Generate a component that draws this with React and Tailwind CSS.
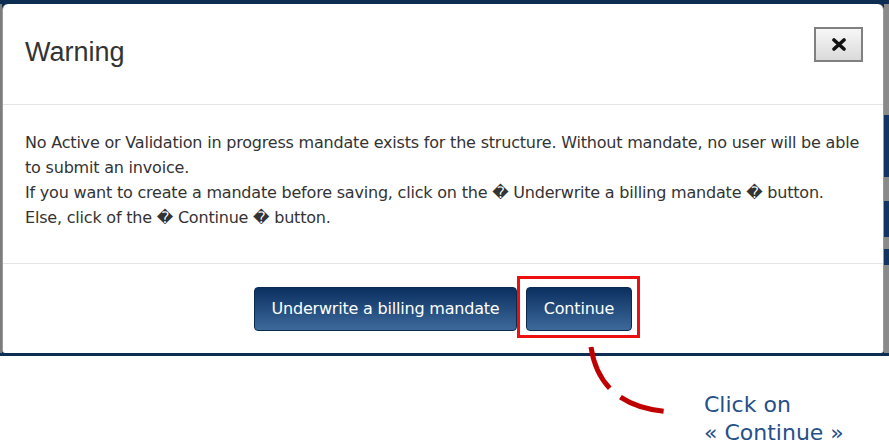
import React from "react";

const bodyFont = {fontFamily: '"DejaVu Sans", Verdana, sans-serif'};

const RightStrip = () => (
	<div className="flex flex-col w-[5px]">
		<div className="h-[111px] bg-[#8a8a8a]" />
		<div className="h-[62px] bg-[#123661]" />
		<div className="h-[24px] bg-[#8a8a8a]" />
		<div className="h-[36px] bg-[#123661]" />
		<div className="h-[12px] bg-[#8a8a8a]" />
		<div className="h-[16px] bg-[#123661]" />
		<div className="flex-1 bg-[#8a8a8a]" />
	</div>
);

const BlueButton = ({children, className = ""}) => (
	<button
		className={
			"h-[44px] rounded-[4px] border border-[#0a2a50] bg-gradient-to-b from-[#0a3060] to-[#3d6a9b] text-white text-[16px] tracking-[-0.2px] " +
			className
		}
		style={bodyFont}
	>
		{children}
	</button>
);

export default function App() {
	return (
		<div className="w-[889px] h-[441px] bg-white relative overflow-hidden">
			<div className="h-[356px] bg-[#0e2d52] pt-[4px] pb-[3px] flex">
				<div className="w-[2px] bg-[#7d7d7d]" />
				<div className="w-[882px] bg-white rounded-t-[6px] rounded-b-[3px] border-l border-r border-[#9a9a9a] flex flex-col">
					<div className="h-[101px] flex items-start justify-between pl-[22px] pr-[20px] pt-[23px] border-b border-[#e5e5e5]">
						<h1
							className="mt-[10px] text-[27px] leading-[31px] text-[#333]"
							style={{fontFamily: '"Liberation Sans", Arial, sans-serif'}}
						>
							Warning
						</h1>
						<button className="w-[49px] h-[35px] border-2 border-[#808080] bg-gradient-to-b from-[#f7f7f7] to-[#dadada] flex items-center justify-center">
							<svg width="16" height="13" viewBox="0 0 16 13">
								<path d="M 3 2 L 13 11 M 13 2 L 3 11" stroke="#111" strokeWidth="3.6" strokeLinecap="round" />
							</svg>
						</button>
					</div>

					<div
						className="h-[159px] pt-[25px] pl-[22px] text-[16px] leading-[25px] tracking-[-0.2px] text-[#333] border-b border-[#e5e5e5]"
						style={bodyFont}
					>
						No Active or Validation in progress mandate exists for the structure. Without mandate, no user will be able
						<br />
						to submit an invoice.
						<br />
						If you want to create a mandate before saving, click on the � Underwrite a billing mandate � button.
						<br />
						Else, click of the � Continue � button.
					</div>

					<div className="flex-1 flex justify-center items-start gap-[9px] pt-[23px]">
						<BlueButton className="w-[263px]">Underwrite a billing mandate</BlueButton>
						<div className="relative">
							<BlueButton className="w-[106px]">Continue</BlueButton>
							<div className="absolute -left-[9px] -right-[8px] -top-[11px] -bottom-[7px] border-[3px] border-[#ee1010] pointer-events-none" />
						</div>
					</div>
				</div>
				<RightStrip />
			</div>

			<svg className="absolute left-0 top-0 pointer-events-none" width="889" height="441">
				<path
					d="M 591 347 Q 600 408 672 412"
					fill="none"
					stroke="#c00000"
					strokeWidth="5"
					strokeDasharray="46 14"
				/>
			</svg>

			<div
				className="absolute left-[704px] top-[391px] text-[22px] leading-[28px] text-[#25508a]"
				style={bodyFont}
			>
				<div>Click on</div>
				<div>« Continue »</div>
			</div>
		</div>
	);
}
